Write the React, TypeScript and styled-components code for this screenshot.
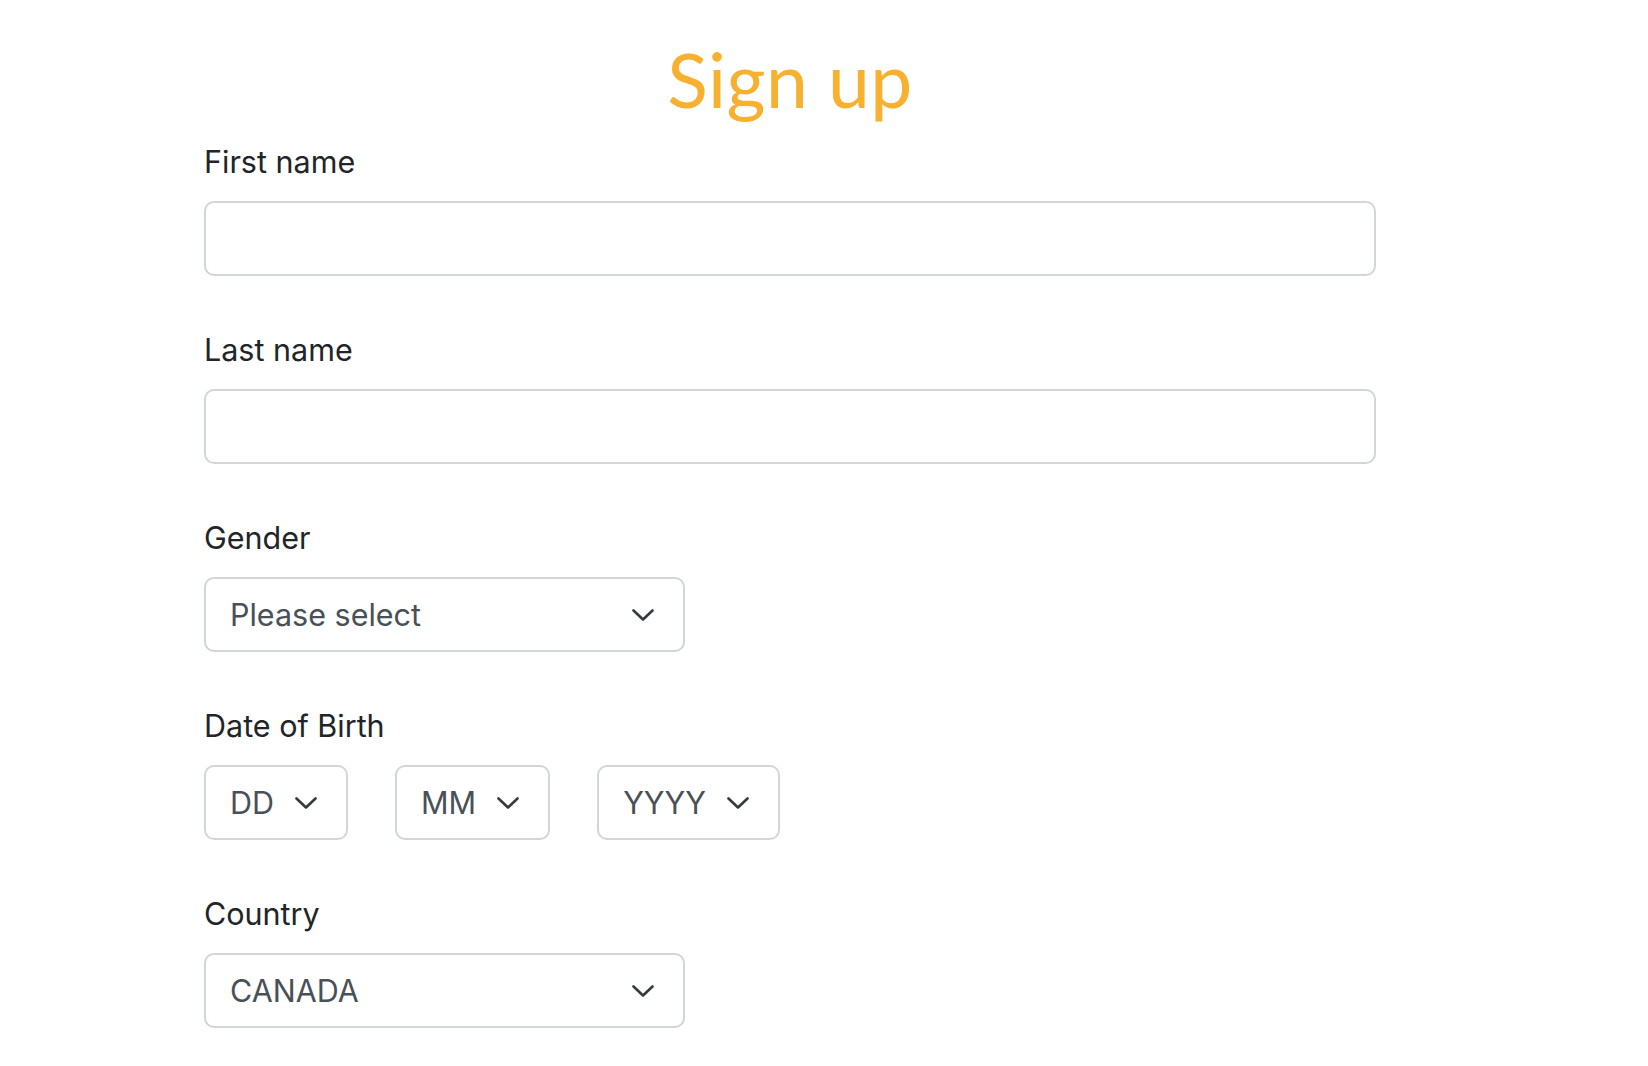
import React from 'react'
import styled, { createGlobalStyle } from 'styled-components'

const GlobalStyle = createGlobalStyle`
    html, body {
        margin: 0;
        padding: 0;
        background: #ffffff;
    }
    body {
        font-family: Inter, 'Liberation Sans', Arial, sans-serif;
        color: #212529;
    }
`

const Page = styled.div`
    padding: 0 0 0 204px;
`

const Form = styled.form`
    width: 1172px;
    display: flex;
    flex-direction: column;
`

const Title = styled.h1`
    margin: 36px 0 16px;
    font-family: Lato, 'Open Sans', sans-serif;
    font-weight: 400;
    font-size: 75px;
    line-height: 86px;
    letter-spacing: 0.5px;
    color: #f8b02f;
    text-align: center;
`

const Group = styled.div`
    display: flex;
    flex-direction: column;
    margin-bottom: 50px;
`

const Label = styled.label`
    font-size: 30.5px;
    line-height: 47px;
    margin-bottom: 16px;
    color: #212529;
`

const TextInput = styled.input`
    box-sizing: border-box;
    height: 75px;
    width: 100%;
    border: 2px solid #d3d6d9;
    border-radius: 10px;
    padding: 0 26px;
    font-family: inherit;
    font-size: 30px;
    color: #495057;
    background: #fff;
    outline: none;
`

const Row = styled.div`
    display: flex;
    gap: 47px;
`

const SelectBox = styled.button<{ $width?: number }>`
    box-sizing: border-box;
    height: 75px;
    width: ${(p) => (p.$width ? `${p.$width}px` : 'auto')};
    display: inline-flex;
    align-items: center;
    justify-content: space-between;
    gap: 21px;
    padding: 0 29px 0 24px;
    border: 2px solid #d3d6d9;
    border-radius: 10px;
    background: #fff;
    font-family: inherit;
    font-size: 30.5px;
    color: #495057;
    cursor: pointer;
`

const Chevron = () => (
    <svg width='22' height='12' viewBox='0 0 22 12' fill='none'>
        <path
            d='M1.5 1.5 L11 10.5 L20.5 1.5'
            stroke='#343a40'
            strokeWidth='2.6'
            strokeLinecap='round'
            strokeLinejoin='round'
        />
    </svg>
)

const Select = ({ value, width }: { value: string; width?: number }) => (
    <SelectBox type='button' $width={width}>
        <span>{value}</span>
        <Chevron />
    </SelectBox>
)

const App = () => (
    <Page>
        <GlobalStyle />
        <Form>
            <Title>Sign up</Title>
            <Group>
                <Label>First name</Label>
                <TextInput />
            </Group>
            <Group>
                <Label>Last name</Label>
                <TextInput />
            </Group>
            <Group>
                <Label>Gender</Label>
                <Row>
                    <Select value='Please select' width={481} />
                </Row>
            </Group>
            <Group>
                <Label>Date of Birth</Label>
                <Row>
                    <Select value='DD' />
                    <Select value='MM' />
                    <Select value='YYYY' />
                </Row>
            </Group>
            <Group>
                <Label>Country</Label>
                <Row>
                    <Select value='CANADA' width={481} />
                </Row>
            </Group>
        </Form>
    </Page>
)

export default App
